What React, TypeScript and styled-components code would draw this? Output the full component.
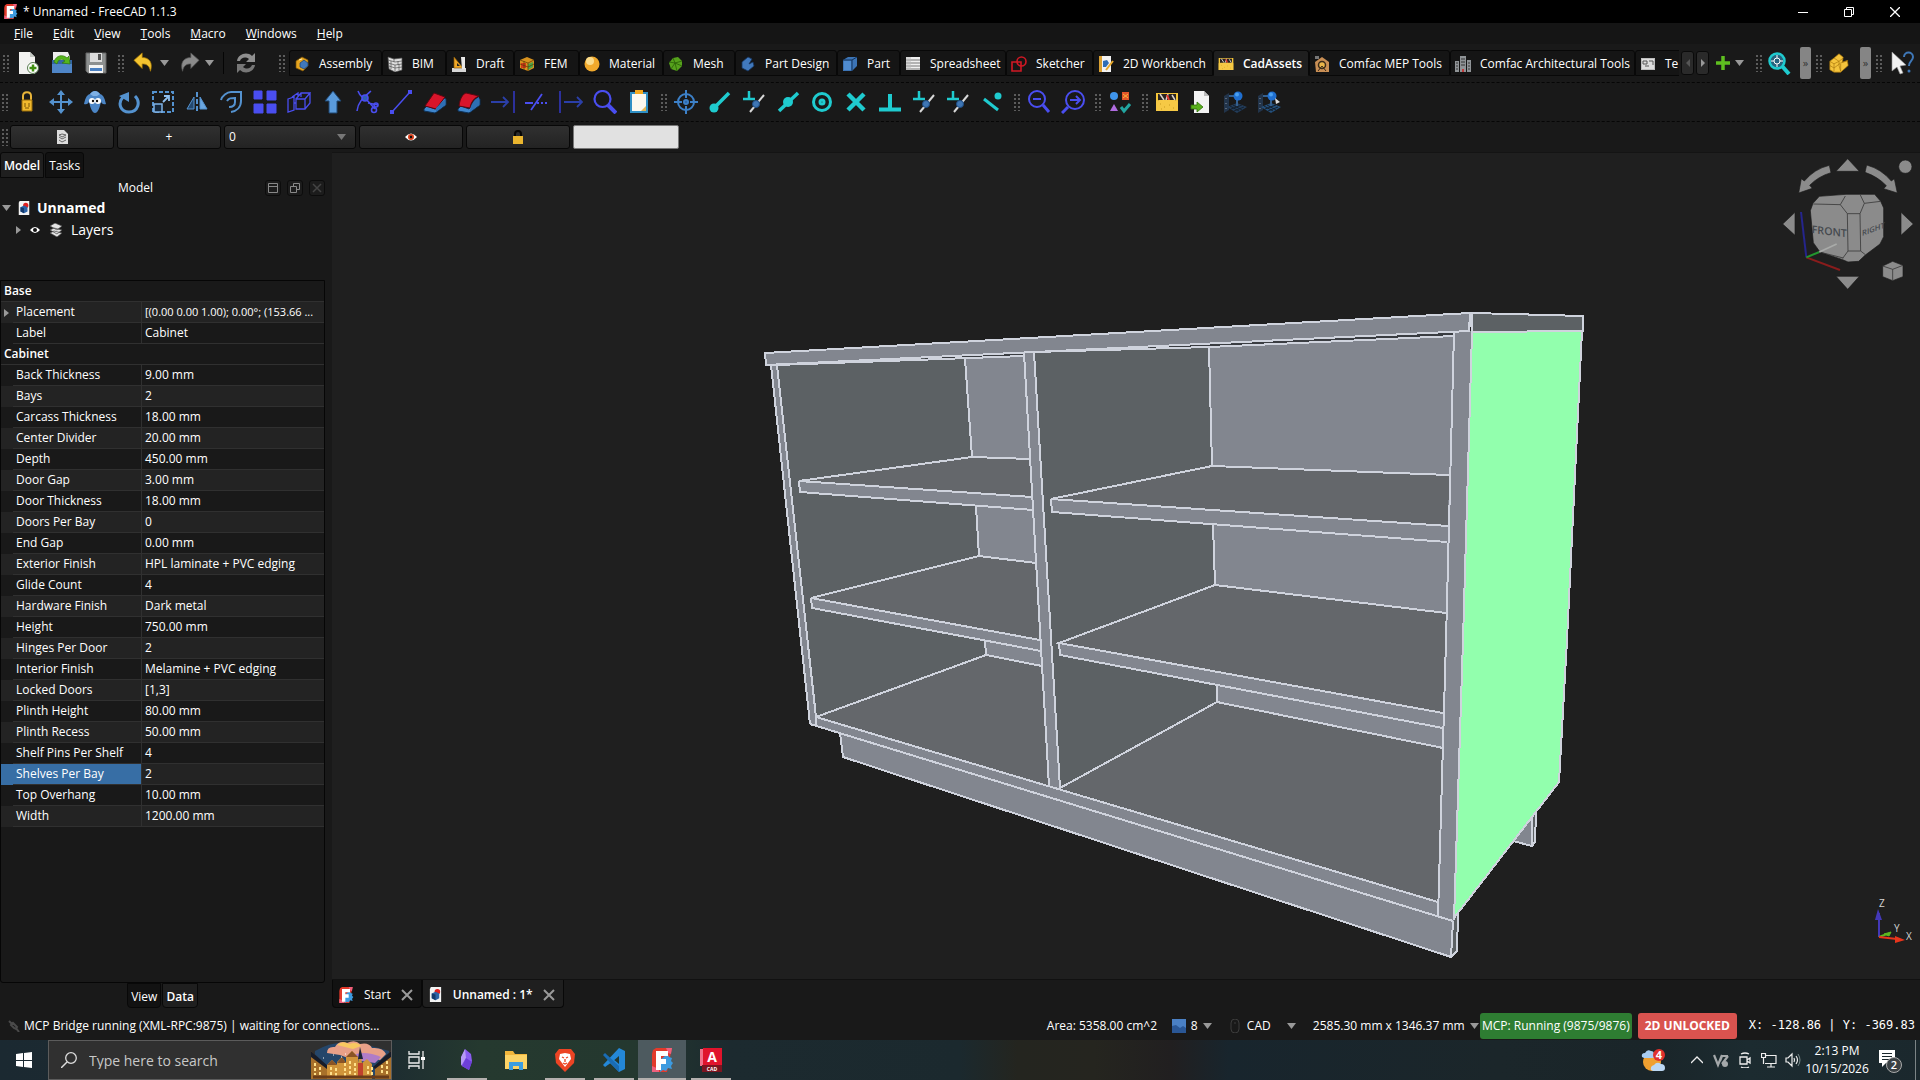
import React from "react";
import styled, { createGlobalStyle } from "styled-components";

const ui = `"Open Sans", "Noto Sans", sans-serif`;

const Global = createGlobalStyle`
  *, *::before, *::after { box-sizing: border-box; }
  body { margin: 0; background: #191919; color: #fff; font: 12px/16px ${ui}; }
  button, input, select { font: inherit; color: inherit; margin: 0; }
  button { background: none; border: 0; padding: 0; cursor: pointer; }
  svg { display: block; flex: none; }
`;

/* ---------- shell ---------- */
const Shell = styled.div`
  display: flex;
  flex-direction: column;
  height: 100vh;
  overflow: hidden;
`;
const TitleBar = styled.header`
  display: flex;
  align-items: center;
  height: 23px;
  padding-left: 3px;
  gap: 5px;
  background: #000;
`;
const TitleText = styled.span`
  flex: 1;
  white-space: nowrap;
`;
const WinControls = styled.div`
  display: flex;
  padding-right: 2px;
`;
const WinButton = styled.button`
  display: grid;
  place-items: center;
  width: 46px;
  height: 20px;
`;
const MenuBar = styled.nav`
  display: flex;
  align-items: center;
  height: 21px;
  padding-left: 14px;
  gap: 20px;
  background: #151515;
`;
const MenuItem = styled.button`
  &::first-letter { text-decoration: underline; }
`;
const Toolbar = styled.div<{ $h: number; $last?: boolean }>`
  display: flex;
  align-items: center;
  height: ${(p) => p.$h}px;
  border-bottom: ${(p) => (p.$last ? "0" : "1px dashed #060606")};
`;
const Grip = styled.span<{ $w: number; $after?: number }>`
  flex: none;
  align-self: center;
  width: ${(p) => p.$w}px;
  height: 18px;
  margin-right: ${(p) => p.$after ?? 0}px;
  background: radial-gradient(circle, #5c5c5c 1px, transparent 1px) right 1px top / 4px 4px repeat-y,
    radial-gradient(circle, #5c5c5c 1px, transparent 1px) right 5px top / 4px 4px repeat-y;
`;
const ToolButton = styled.button<{ $w?: number; $gap?: number }>`
  flex: none;
  display: flex;
  align-items: center;
  justify-content: center;
  gap: ${(p) => p.$gap ?? 5}px;
  width: ${(p) => p.$w ?? 34}px;
  height: 34px;
`;
const Rule = styled.span`
  width: 1px;
  height: 22px;
  margin: 0 5px;
  background: #050505;
`;
const TabStrip = styled.div`
  flex: 1;
  min-width: 0;
  display: flex;
  margin-left: 2px;
  overflow: hidden;
`;
const BenchTab = styled.button<{ $w: number; $active?: boolean }>`
  flex: none;
  display: flex;
  align-items: center;
  gap: 9px;
  width: ${(p) => p.$w}px;
  height: 26px;
  padding: 1px 0 0 4px;
  border: 1px solid #080808;
  border-bottom-color: ${(p) => (p.$active ? "#1f1f1f" : "#080808")};
  border-radius: 3px 3px 0 0;
  background: ${(p) => (p.$active ? "#1f1f1f" : "#151515")};
  font-weight: ${(p) => (p.$active ? 600 : 400)};
  white-space: nowrap;
`;
const ScrollButton = styled.button`
  flex: none;
  display: grid;
  place-items: center;
  width: 13px;
  height: 24px;
  margin-left: 2px;
  border: 1px solid #0a0a0a;
  border-radius: 3px;
  background: #2a2a2a;
`;
const Extension = styled.button`
  flex: none;
  width: 11px;
  height: 32px;
  margin-left: 6px;
  border-radius: 2px;
  background: #858585;
  color: #333;
  font-size: 11px;
`;
const LayerBar = styled.div`
  display: flex;
  gap: 3px;
`;
const panelButton = `
  height: 24px;
  border: 1px solid #070707;
  border-radius: 3px;
  background: linear-gradient(#303030, #232323);
`;
const WideButton = styled.button`
  ${panelButton}
  display: grid;
  place-items: center;
  width: 104px;
`;
const SelectBox = styled.label`
  ${panelButton}
  display: flex;
  align-items: center;
  width: 132px;
  padding: 0 9px 0 4px;
`;
const BareSelect = styled.select`
  appearance: none;
  flex: 1;
  min-width: 0;
  padding: 0;
  border: 0;
  outline: 0;
  background: transparent;
`;
const ColourWell = styled.button`
  width: 106px;
  height: 24px;
  border: 1px solid #777;
  border-radius: 2px;
  background: #e1e1e1;
`;

/* ---------- dock ---------- */
const Work = styled.main`
  flex: 1;
  min-height: 0;
  display: flex;
  gap: 7px;
`;
const Dock = styled.aside`
  flex: none;
  display: flex;
  flex-direction: column;
  width: 325px;
`;
const TabRow = styled.div<{ $center?: boolean }>`
  display: flex;
  gap: 1px;
  justify-content: ${(p) => (p.$center ? "center" : "flex-start")};
`;
const DockTab = styled.button<{ $active?: boolean; $bottom?: boolean }>`
  height: ${(p) => (p.$bottom ? 25 : 26)}px;
  padding: 2px 3px 0;
  border: 1px solid #080808;
  border-radius: ${(p) => (p.$bottom ? "0 0 4px 4px" : "3px 3px 0 0")};
  background: ${(p) => (p.$active ? "#1f1f1f" : "#121212")};
  font-weight: ${(p) => (p.$active ? 600 : 400)};
`;
const DockHead = styled.div`
  display: flex;
  align-items: center;
  gap: 6px;
  height: 19px;
`;
const DockTitle = styled.h2`
  flex: 1;
  margin: 0;
  padding-left: 12px;
  text-align: center;
  font: inherit;
`;
const DockButton = styled.button`
  display: grid;
  place-items: center;
  width: 16px;
  height: 16px;
  border: 1px solid #0c0c0c;
  border-radius: 3px;
  background: #1c1c1c;
`;
const Tree = styled.ul`
  height: 83px;
  margin: 0;
  padding: 0;
  list-style: none;
  font-size: 14px;
`;
const TreeRow = styled.li<{ $indent: number; $bold?: boolean; $gap: number }>`
  display: flex;
  align-items: center;
  gap: ${(p) => p.$gap}px;
  height: 22px;
  padding-left: ${(p) => p.$indent}px;
  font-weight: ${(p) => (p.$bold ? 700 : 400)};
`;
const PropBox = styled.div`
  flex: 1;
  min-height: 0;
  border: 1px solid #060606;
  border-radius: 0 0 3px 3px;
`;
const PropTable = styled.table`
  width: 100%;
  table-layout: fixed;
  border-collapse: separate;
  border-spacing: 0;
`;
const GroupCell = styled.th`
  height: 21px;
  padding: 0 3px;
  border-bottom: 1px solid #303030;
  text-align: left;
  font-weight: 600;
`;
const PropRow = styled.tr<{ $alt: boolean }>`
  height: 21px;
  background: ${(p) => (p.$alt ? "#232323" : "#191919")};
`;
const Gutter = styled.td<{ $on?: boolean }>`
  width: 12px;
  padding: 0 0 0 3px;
  background: ${(p) => (p.$on ? "#376ea5" : "transparent")};
`;
const NameCell = styled.td<{ $on?: boolean }>`
  width: 129px;
  padding: 0 3px;
  border-bottom: 1px solid #303030;
  border-right: 1px solid #303030;
  background: ${(p) => (p.$on ? "#376ea5" : "transparent")};
  white-space: nowrap;
`;
const ValueCell = styled.td<{ $dense?: boolean }>`
  padding: 0 3px;
  border-bottom: 1px solid #303030;
  white-space: nowrap;
  font-size: ${(p) => (p.$dense ? 11 : 12)}px;
`;

/* ---------- viewer ---------- */
const Viewer = styled.section`
  flex: 1;
  min-width: 0;
  display: flex;
  flex-direction: column;
`;
const Canvas = styled.div`
  position: relative;
  flex: 1;
  min-height: 0;
  border-top: 1px solid #141414;
  background: #1f1f1f;
`;
const Scene = styled.svg`
  width: 100%;
  height: 100%;
`;
const NavCube = styled.svg`
  position: absolute;
  top: 0;
  right: 0;
`;
const AxisCross = styled.svg`
  position: absolute;
  right: 0;
  bottom: 26px;
`;
const DocTabs = styled.div`
  display: flex;
  height: 29px;
  border-top: 1px solid #111;
`;
const DocTab = styled.div<{ $active?: boolean }>`
  display: flex;
  align-items: center;
  gap: 10px;
  padding: 2px 8px 0 5px;
  border: 1px solid #080808;
  border-top: 0;
  border-radius: 0 0 4px 4px;
  background: ${(p) => (p.$active ? "#1f1f1f" : "#121212")};
  font-weight: ${(p) => (p.$active ? 600 : 400)};
`;
const CloseTab = styled.button``;

/* ---------- status bar ---------- */
const Status = styled.footer`
  flex: none;
  display: flex;
  align-items: center;
  height: 32px;
  padding: 4px 5px 0 8px;
  white-space: nowrap;
`;
const Message = styled.div`
  flex: 1;
  display: flex;
  align-items: center;
  gap: 4px;
`;
const StatusItem = styled.button<{ $w: number }>`
  flex: none;
  display: flex;
  align-items: center;
  gap: 5px;
  width: ${(p) => p.$w}px;
`;
const Spread = styled.span<{ $pad?: number }>`
  flex: 1;
  padding-left: ${(p) => p.$pad ?? 0}px;
  text-align: left;
`;
const Badges = styled.div`
  display: flex;
  gap: 6px;
  margin: 0 6px 0 8px;
`;
const Badge = styled.button<{ $bg: string; $w: number; $bold?: boolean }>`
  width: ${(p) => p.$w}px;
  height: 26px;
  border-radius: 3px;
  background: ${(p) => p.$bg};
  font-weight: ${(p) => (p.$bold ? 700 : 400)};
`;
const Coords = styled.output`
  padding: 0 0 3px 6px;
  font: 12px/16px "DejaVu Sans Mono", "Liberation Mono", monospace;
`;

/* ---------- taskbar ---------- */
const Taskbar = styled.footer`
  flex: none;
  display: flex;
  height: 40px;
  background: linear-gradient(90deg, #1b2931 0%, #1d2c31 20%, #25392f 25%, #24382f 33%, #1c2a2f 38%, #1b292e 50%, #24251f 53%, #25251f 57%, #211f20 61%, #18252d 64%, #1b262a 78%, #1a2529 86%, #1c2b30 91%, #1b282d 100%);
`;
const StartButton = styled.button`
  display: grid;
  place-items: center;
  width: 48px;
`;
const SearchBox = styled.label`
  display: flex;
  align-items: center;
  gap: 12px;
  width: 344px;
  padding-left: 12px;
  border: 1px solid #5c5c5c;
  background: #303030;
`;
const SearchInput = styled.input`
  flex: 1;
  min-width: 0;
  padding: 2px 0 0;
  border: 0;
  outline: 0;
  background: transparent;
  font-size: 14px;
  &::placeholder { color: #c8c8c8; opacity: 1; }
`;
const TaskApp = styled.button<{ $running?: boolean; $active?: boolean; $w?: number }>`
  display: flex;
  flex-direction: column;
  align-items: center;
  justify-content: space-between;
  width: ${(p) => p.$w ?? 49}px;
  padding-top: 8px;
  background: ${(p) => (p.$active ? "#4d5a5f" : "transparent")};
  &::after {
    content: "";
    width: ${(p) => (p.$active ? "100%" : "40px")};
    height: 2px;
    background: ${(p) => (p.$running ? "#b4b0ae" : "transparent")};
  }
`;
const Tray = styled.div`
  flex: 1;
  display: flex;
  align-items: center;
  justify-content: flex-end;
  padding-right: 4px;
`;
const TrayButton = styled.button<{ $w?: number }>`
  display: grid;
  place-items: center;
  width: ${(p) => p.$w ?? 24}px;
  height: 40px;
`;
const Clock = styled.time`
  width: 64px;
  text-align: center;
  line-height: 18px;
`;
const ShowDesktop = styled.span`
  width: 1px;
  height: 40px;
  margin-left: 4px;
  background: #7c8486;
`;

/* ---------- icons ---------- */
const Svg = ({ s = 24, v = 24, children }: { s?: number; v?: number; children: React.ReactNode }) => (
  <svg width={s} height={s} viewBox={`0 0 ${v} ${v}`} fill="none" aria-hidden="true">{children}</svg>
);
const Down = ({ c = "#999" }: { c?: string }) => (
  <svg width="9" height="6" viewBox="0 0 9 6" aria-hidden="true"><path d="M0 0h9L4.500 6z" fill={c} /></svg>
);
const Side = ({ c = "#999" }: { c?: string }) => (
  <svg width="5" height="8" viewBox="0 0 5 8" aria-hidden="true"><path d="M0 0l5 4-5 4z" fill={c} /></svg>
);

const FreeCadLogo = ({ s }: { s: number }) => (
  <Svg s={s}>
    <path d="M3 2l3-2h16l-2 9-3 15H2V6z" fill="#e23a2b" />
    <path d="M15 8l3-1 1 2 3 1-1 3 2 2-2 3 1 3-4-1-2 3-3-1-3 2V12z" fill="#3d9be0" />
    <path d="M2 18l7 3v3H2zM16 0h6l-1 6-3-1z" fill="#f0607c" />
    <path d="M6 3h12v5h-7v3h5v5h-5v6H6z" fill="#fff" />
  </Svg>
);
const DocIcon = ({ s }: { s: number }) => (
  <Svg s={s} v={16}>
    <path d="M3 0h11v16H2V2z" fill="#f3f3f3" />
    <circle cx="10" cy="5" r="3" fill="#e02020" />
    <path d="M4 7l4-2 4 2v5l-4 2-4-2z" fill="#2c62a5" />
    <path d="M4 7l4 1v6l-4-2z" fill="#143a6e" />
  </Svg>
);

const B = "#5492cf";
const P = "#4a4ef0";
const C = "#1fcbcf";
const W = "#d8d8d8";

const mag = (x: number, y: number, r: number, c: string, flip = false) => (
  <g stroke={c} strokeWidth="2">
    <circle cx={x} cy={y} r={r} />
    <path d={flip ? `M${x - r + 2} ${y + r - 2}L1 23` : `M${x + r - 2} ${y + r - 2}l6 7`} strokeWidth="3" />
  </g>
);
const hingeDot = (
  <>
    <path d="M1 9h12M7 1v8" stroke={C} strokeWidth="2.500" />
    <path d="M8 22L22 5" stroke={W} strokeWidth="2" />
    <circle cx="14" cy="14" r="3.500" fill="#3f76b4" stroke="#1e4d85" />
  </>
);
const bluegrid = (lit: boolean) => (
  <>
    <path d="M1 6l5-3v17l-5 3z" fill="#22344a" />
    <path d="M3 8v1M3 13v1M3 18v1" stroke="#8c98a8" />
    <path d="M4 17l10-4 10 4-10 6z" fill={lit ? "#24507c" : "#223c5a"} />
    <path d="M8 19l11-4M11 21l10-4M10 15l9 5M7 16l9 5" stroke="#15202c" />
    <path d="M14 9v7M6 6h6" stroke="#35608f" strokeWidth="2" />
    <circle cx="15" cy="6" r="4.500" fill="#1f6fd0" />
    <circle cx="14" cy="4.500" r="2" fill="#4aa0f0" />
  </>
);

const I: Record<string, React.ReactNode> = {
  new: <><path d="M3 1h11l5 5v17H3z" fill="#f2f2f0" /><path d="M14 1l5 5h-5z" fill="#c4c8c2" /><circle cx="17" cy="17" r="5.500" fill="#fff" stroke="#587a50" /><path d="M17 13.500v7M13.500 17h7" stroke="#3f8f10" strokeWidth="2.500" /></>,
  open: <><path d="M3 1h15l2 5v6H3z" fill="#eee" /><path d="M2 9h20v13H2z" fill="#3465a4" /><path d="M2 13h20v9H2z" fill="#4f86c8" /><path d="M4 11C6 4 13 3 17 7l2-2 1 8-8-1 3-2c-3-3-7-2-8 3z" fill="#55b51c" stroke="#2f7a0a" strokeWidth=".7" /></>,
  save: <><path d="M2 2h20v20H4l-2-2z" fill="#8d9090" stroke="#666" /><path d="M6 2h12v9H6z" fill="#ddd" /><path d="M14 3h3v6h-3z" fill="#555" /><path d="M5 14h14v8H5z" fill="#f4f4f4" /><path d="M6 17h12v3H6z" fill="#4a7fc0" /></>,
  undo: <path d="M1 9l9-8v5c8 0 12 6 9 15-1-6-4-8-9-8v5z" fill="#f4c430" stroke="#a97c05" strokeWidth=".8" />,
  redo: <path d="M23 9l-9-8v5C6 6 2 12 5 21c1-6 4-8 9-8v5z" fill="#8b8b8b" stroke="#555" strokeWidth=".8" />,
  refresh: <><path d="M3 10C4 3 13 0 18 5l3-3v9h-9l3-3c-4-3-8-1-9 2z" fill="#8f8f8f" /><path d="M21 14c-1 7-10 10-15 5l-3 3v-9h9l-3 3c4 3 8 1 9-2z" fill="#777" /></>,
  lock: <><path d="M8 11V6c0-5 8-5 8 0v5" stroke="#e8b53a" strokeWidth="2" /><path d="M7 10h10v11H7z" fill="#f0b92e" stroke="#9a6c08" /><path d="M10 13v4M14 13v4M10 18h4" stroke="#7a5505" /></>,
  move: <><path d="M12 2v20M2 12h20" stroke={B} strokeWidth="2" /><path d="M12 0l4 5H8zM12 24l4-5H8zM0 12l5-4v8zM24 12l-5-4v8z" fill={B} /></>,
  goat: <><path d="M7 4c3-4 7-4 10 0 4 1 5 6 6 10-3 1-5-1-5-3-1 6-3 12-6 12s-5-6-6-12c0 2-2 4-5 3 1-4 2-9 6-10z" fill="#4c86c6" /><path d="M7 4c3-4 7-4 10 0l-3 2h-4z" fill="#7eb0e4" /><circle cx="9" cy="11" r="3" fill="#fff" /><circle cx="15" cy="11" r="3" fill="#fff" /><circle cx="10" cy="11" r="1.200" fill="#111" /><circle cx="14" cy="11" r="1.200" fill="#111" /></>,
  rotate: <><path d="M6 7c-6 7-2 15 6 15 9 0 12-10 6-16" stroke={B} strokeWidth="3" /><path d="M2 6l10-4v10z" fill={B} /></>,
  scale: <><path d="M2 2h20v20H2z" stroke={B} strokeWidth="2" strokeDasharray="4 2" /><path d="M3 14h8v8H3z" fill="#16283c" stroke="#7fb2e6" strokeWidth="1.500" /><path d="M12 12l6-6M13 6h5v5" stroke="#8fc0f0" strokeWidth="1.800" /></>,
  mirror: <><path d="M12 2v20" stroke={B} strokeWidth="2" strokeDasharray="5 2" /><path d="M9 7v12H2z" fill="#24486e" stroke={B} /><path d="M15 7v12h7z" fill="#6aa6e0" stroke={B} /></>,
  offset: <><path d="M2 10c1-4 6-8 10-8h10v9c0 6-4 10-10 11" stroke={B} strokeWidth="2" /><path d="M8 11c2-3 4-3 8-3v4c0 4-3 5-6 5" stroke={B} strokeWidth="2" /></>,
  array: <path d="M1 1h8v8H1zM14 1h9v9h-9zM1 14h9v9H1zM14 14h9v9h-9z" fill={P} stroke={P} />,
  box: <path d="M1 9l6-2v13l-6 2zM9 9h9v10H9zM9 9l5-6h9l-5 6M23 3v10l-5 6M9 9l5-6M14 3v4M7 13h2M5 7l6-4v3" stroke={P} strokeWidth="1.300" />,
  up: <path d="M12 1l8 10h-4v12H8V11H4z" fill="#5a9bdc" stroke="#1e4670" />,
  trim: <g stroke={P} strokeWidth="1.600"><path d="M3 1c2 5 5 7 8 7M2 21C3 12 8 8 16 1M11 9l9 10M13 13l10 2" /><circle cx="19" cy="20" r="2.500" /><circle cx="21" cy="15" r="2" /><circle cx="10" cy="8" r="3" fill="#2f5fb4" /></g>,
  line: <><path d="M3 22L21 2" stroke={P} strokeWidth="1.500" /><path d="M1 20h4v4H1zM19 0h4v4h-4z" fill={P} /></>,
  fillet: <><path d="M1 19l3-3 8 3 9-11 2 1v6l-11 8-11-2z" fill="#3f86cc" stroke="#0d3157" /><path d="M2 16L11 3l11 4-9 12z" fill="#d8152b" stroke="#5c0610" /><path d="M22 9v6l-9 7v-4z" fill="#2e6fb4" /></>,
  chamfer: <><path d="M1 19l3-3 8 3 9-11 2 1v6l-11 8-11-2z" fill="#3f86cc" stroke="#0d3157" /><path d="M2 16C3 8 6 4 9 3l13 3c-5 2-8 6-9 12z" fill="#d8152b" stroke="#5c0610" /><path d="M22 7v8l-9 7c0-7 4-13 9-15z" fill="#2e6fb4" /></>,
  arrowBar: <><path d="M0 12h17M12 7l5 5-5 5" stroke="#2b3fa8" strokeWidth="1.800" /><path d="M23 1v22" stroke="#3338c8" strokeWidth="1.500" /></>,
  trimex: <><path d="M0 13h8M6 20L17 4" stroke={P} strokeWidth="1.800" /><path d="M12 13h12" stroke={P} strokeWidth="1.800" strokeDasharray="2 2" /></>,
  barArrow: <><path d="M5 12h18M18 7l5 5-5 5" stroke="#2b3fa8" strokeWidth="1.800" /><path d="M1 1v22" stroke="#3338c8" strokeWidth="1.500" /></>,
  zoom: <g stroke={P}><circle cx="9.500" cy="9" r="8" strokeWidth="2.200" /><path d="M15 15l8 8" strokeWidth="4" /></g>,
  clip: <><path d="M3 2h18v21H3z" fill="#2f8fc4" /><path d="M5 4h14v17H5z" fill="#fbf8ee" /><path d="M8 0h8v4H8z" fill="#f2a81d" /><path d="M14 21l5-5v5z" fill="#e2b755" /></>,
  target: <g stroke="#3c80c8" strokeWidth="2"><circle cx="12" cy="12" r="8" /><path d="M12 0v8M12 16v8M0 12h8M16 12h8" /><circle cx="12" cy="12" r="2" fill="#2a62a4" /></g>,
  endp: <><path d="M6 18L21 3" stroke={C} strokeWidth="3.500" /><circle cx="6" cy="18" r="4.500" fill={C} /></>,
  hinge: hingeDot,
  mid: <><path d="M3 21L22 3" stroke={C} strokeWidth="3.500" /><circle cx="12" cy="12" r="5" fill={C} /></>,
  centre: <g stroke={C}><circle cx="12" cy="12" r="8.500" strokeWidth="3" /><circle cx="12" cy="12" r="2" strokeWidth="3" /></g>,
  cross: <path d="M4 4l16 16M20 4L4 20" stroke={C} strokeWidth="4.500" />,
  perp: <path d="M1 19.500h22M12 4v15" stroke={C} strokeWidth="4" />,
  near: <><path d="M4 9l14 11" stroke={C} strokeWidth="3" /><circle cx="18" cy="6" r="3.500" fill={C} /></>,
  zoomOut: <>{mag(10, 9, 8, P)}<path d="M6 9h8" stroke={P} strokeWidth="2" /></>,
  zoomGo: <>{mag(14, 10, 9, P, true)}<path d="M9 10h9M15 6l4 4-4 4" stroke={P} strokeWidth="2" /></>,
  shapes: <><circle cx="6" cy="6" r="4" fill="#3f95ec" /><path d="M14 2h7v8h-7z" fill="#e2552a" /><path d="M15 4l5 4M20 4l-5 4" stroke="#f6b73c" /><path d="M6 14l4 7H2z" fill="#b06ce0" /><path d="M13 17l3 4 6-7" stroke="#22a5a0" strokeWidth="3" /></>,
  toolbox: <><path d="M1 3h22v18H1z" fill="#f5c53a" /><path d="M3 4h18v7H3z" fill="#2a2420" /><path d="M5 4l4 6M13 4l-2 6M17 5l3 5" stroke="#d9d2cc" strokeWidth="1.500" /><path d="M12 5l2 5" stroke="#e83a30" strokeWidth="2" /><path d="M1 11l3-1h16l3 1v10H1z" fill="#f6c945" /><path d="M5 14h1M9 17h1M14 15h1M18 18h1M6 19h1" stroke="#c99a1e" /></>,
  importDoc: <><path d="M5 1h10l5 5v17H5z" fill="#f2f2f2" /><path d="M15 1l5 5h-5z" fill="#bbb" /><path d="M2 15h6v-3l6 5-6 5v-3H2z" fill="#59b01c" stroke="#2f6f08" strokeWidth=".8" /></>,
  db1: bluegrid(false),
  db2: <>{bluegrid(true)}<path d="M18 8l5 4-4 2z" fill="#ddd" /></>,
  plus: <path d="M6 0h4v6h6v4h-6v6H6v-6H0V6h6z" fill="#5fbf20" />,
  find: <><circle cx="10" cy="10" r="7.500" fill="#27637e" stroke={C} strokeWidth="2.500" /><path d="M15 15l7 8" stroke={C} strokeWidth="4" /><circle cx="10" cy="10" r="3" stroke="#fff" /><path d="M10 4v3M10 13v3M4 10h3M13 10h3" stroke="#fff" /></>,
  blocks: <g fill="#f5c43c" stroke="#a8760c" strokeWidth=".8"><path d="M6 6l6-5 5 4-1 6 6-2 1 6-9 8H6l-5-3V10z" /><path d="M1 10l5 3v9M6 6l6 4 5-4M1 15l5 3 8-6 9-3M12 10v5l2 7M6 13l6-3M14 13v9" fill="none" /></g>,
  help: <><path d="M2 1l14 13-6 1 3 7-3 1-3-7-5 4z" fill="#f2f2f2" stroke="#999" strokeWidth=".6" /><path d="M14 6c0-6 9-6 9 0 0 4-4 4-4 9" stroke="#3f78b8" strokeWidth="2" /><circle cx="19" cy="20" r="1.500" fill="#3f78b8" /></>,
  /* workbench marks on a 16 unit grid */
  assembly: <><path d="M2 5l6-4 6 3v6l-5 5-7-3z" fill="#e6a51f" stroke="#7a5206" strokeWidth=".7" /><path d="M6 7l4-3 4 3v3l-4 3-4-2z" fill="#3f78bb" stroke="#173c6a" strokeWidth=".7" /><path d="M5 4l3-1" stroke="#fff2b8" /></>,
  bim: <g fill="#dedede" stroke="#555" strokeWidth=".7"><path d="M1 1l6 2 8-1v12l-7 2-6-3z" /><path d="M1 4l7 2 7-1M1 7l7 2 7-1M2 10l6 2 7-1M7 3v3M4 5v3M11 5v4M8 9v6M4 8v5M12 8v6" fill="none" /></g>,
  draft: <><path d="M1 12h14v4H1z" fill="#d7d7d7" /><path d="M3 12V1l9 11z" fill="#f0a828" stroke="#8a5a08" strokeWidth=".7" /><path d="M10 1h4v12h-3z" fill="#e9e9e9" /><path d="M6 10V7l3 3z" fill="#222" /></>,
  fem: <><path d="M1 4l7-3 7 3v8l-6 3-8-3z" fill="#d8921e" /><path d="M2 7h5v5H2z" fill="#d33a1a" /><path d="M9 8l5-2v5l-5 3z" fill="#4ea548" /><path d="M1 4l8 3 6-3M9 7v8M5 5v9M1 8l8 3 6-3" stroke="#5a3804" strokeWidth=".7" /></>,
  material: <><circle cx="8" cy="8" r="7.500" fill="#f1a92c" /><circle cx="6" cy="5" r="4" fill="#fbdc8c" /></>,
  mesh: <><path d="M5 2l5-1 4 4v5l-5 5-6-2-2-6z" fill="#56a21c" /><path d="M5 2l2 5-6-1M7 7l7-2M7 7l2 8M7 7l-4 6M7 7l7 3" stroke="#2a5e08" strokeWidth=".8" /></>,
  partDesign: <path d="M2 6l6-5 4 2-3 5 4-2 1 4-6 5-6-3z" fill="#4179bd" stroke="#15355e" strokeWidth=".8" />,
  part: <><path d="M1 4l5-3h9v9l-5 5H1z" fill="#3c74b6" /><path d="M1 4h9l5-3M10 4v11" stroke="#12325a" /><path d="M2 5h7v9H2z" fill="#4f8bcf" /></>,
  sheet: <><path d="M1 1h14v13H1z" fill="#f0f0f0" /><path d="M1 4h14M1 7h14M1 10h14M1 13h14" stroke="#777" /><path d="M1 1h5v13H1z" fill="#bbb" opacity=".5" /></>,
  sketcher: <g stroke="#cf1824" strokeWidth="1.600"><path d="M1 6h9v9H1z" /><circle cx="10.500" cy="5.500" r="4.500" /></g>,
  twoD: <><path d="M1 0h3v16H1z" fill="#d9a032" /><path d="M4 0h9v16H4z" fill="#f2f2f2" /><path d="M5 5l4-1 2 3-3 4H5z" fill="#2f6db5" /><path d="M15 5l-7 9" stroke="#e8a82a" strokeWidth="2" /></>,
  mep: <><path d="M1 6l7-5 7 5v10H2z" fill="#c98f55" /><path d="M1 0h4v3H1z" fill="#777" /><circle cx="8" cy="9" r="3.500" fill="#e8b44a" stroke="#3a2a1a" strokeWidth="1.500" /><path d="M4 15l4-5 4 5" stroke="#3a2a1a" /></>,
  arch: <><path d="M0 5h4v11H0zM5 0h6v16H5zM12 4h4v12h-4z" fill="#8f9396" /><path d="M1 7h2M1 10h2M1 13h2M6 3h4M6 6h4M6 9h4M13 7h2M13 10h2M13 13h2" stroke="#333" /><path d="M7 13h2v3H7z" fill="#c03a3a" /></>,
  tech: <><path d="M1 2h14v12H1z" fill="#bdbdbd" /><path d="M2 3h12v10H2z" fill="#ddd" /><path d="M3 5h4v3H3zM9 5h4v4M5 10h4" stroke="#555" /></>,
  obsidian: <><path d="M10 1l6 5 1 7-3 9-7-4-1-8z" fill="#8a5cf0" /><path d="M10 1l1 9-5 8V9z" fill="#b79af6" /><path d="M11 10l6 4-3 8-7-4z" fill="#6d3fd8" /></>,
  folder: <><path d="M1 3h8l2 3h12v15H1z" fill="#f2b63c" /><path d="M1 7h22v14H1z" fill="#fcd366" /><path d="M5 22v-8h14v8h-4v-4H9v4z" fill="#3b9de0" /></>,
  brave: <><path d="M6 1h12l4 5-1 9-9 9-9-9-1-9z" fill="#ec4424" /><path d="M7 6l5-1 5 1 1 5-3 4-3 4-3-4-3-4z" fill="#fff" /><path d="M9 9l2 1M15 9l-2 1M12 11v3M10 15l2 1 2-1" stroke="#ec4424" strokeWidth="1.300" /></>,
  code: <><path d="M17 0l6 3v18l-6 3L6 13l4-3 7 6V8l-7 6L3 19l-2-2L17 0z" fill="#2488d8" /><path d="M1 7l2-2 14 13v6z" fill="#1a6cb4" /></>,
};

/* ---------- data ---------- */
const benches: [string, string, number][] = [
  ["assembly", "Assembly", 93], ["bim", "BIM", 64], ["draft", "Draft", 68], ["fem", "FEM", 65],
  ["material", "Material", 84], ["mesh", "Mesh", 72], ["partDesign", "Part Design", 102], ["part", "Part", 63],
  ["sheet", "Spreadsheet", 106], ["sketcher", "Sketcher", 87], ["twoD", "2D Workbench", 120],
  ["toolbox", "CadAssets", 96], ["mep", "Comfac MEP Tools", 141], ["arch", "Comfac Architectural Tools", 185],
  ["tech", "Te", 48],
];
const toolGroups: string[][] = [
  ["lock", "move", "goat", "rotate", "scale", "mirror", "offset", "array", "box", "up", "trim", "line", "fillet", "chamfer", "arrowBar", "trimex", "barArrow", "zoom", "clip"],
  ["target", "endp", "hinge", "mid", "centre", "cross", "perp", "hinge", "hinge", "near"],
  ["zoomOut", "zoomGo"],
  ["shapes"],
  ["toolbox", "importDoc", "db1", "db2"],
];
const cabinetProps: [string, string][] = [
  ["Back Thickness", "9.00 mm"], ["Bays", "2"], ["Carcass Thickness", "18.00 mm"], ["Center Divider", "20.00 mm"],
  ["Depth", "450.00 mm"], ["Door Gap", "3.00 mm"], ["Door Thickness", "18.00 mm"], ["Doors Per Bay", "0"],
  ["End Gap", "0.00 mm"], ["Exterior Finish", "HPL laminate + PVC edging"], ["Glide Count", "4"],
  ["Hardware Finish", "Dark metal"], ["Height", "750.00 mm"], ["Hinges Per Door", "2"],
  ["Interior Finish", "Melamine + PVC edging"], ["Locked Doors", "[1,3]"], ["Plinth Height", "80.00 mm"],
  ["Plinth Recess", "50.00 mm"], ["Shelf Pins Per Shelf", "4"], ["Shelves Per Bay", "2"],
  ["Top Overhang", "10.00 mm"], ["Width", "1200.00 mm"],
];

const FRONT = "#82868f";
const SIDE = "#5c6164";
const FLAT = "#64676b";

/* Faces are painted back to front. */
const faces: [string, string][] = [
  [FRONT, "1513,841 1532,846 1532,817 1540,800"],
  [SIDE, "1532,846 1535,842 1536,811 1532,817"],
  [SIDE, "777,365 1454,333 1438,902 816,717"],
  [FRONT, "965,359 1030,356 1042,666 986,655"],
  [FRONT, "1209,347 1454,336 1443,748 1217,702"],
  [SIDE, "1034,352 1209,347 1217,702 1060,788"],
  [FLAT, "816,717 986,655 1042,666 1049,786"],
  [FLAT, "1060,788 1217,702 1443,748 1438,902"],
  [FLAT, "799,481 972,457 1030,459 1032,497"],
  [FLAT, "811,598 979,556 1036,563 1040,640"],
  [FLAT, "1051,499 1212,466 1449,475 1448,526"],
  [FLAT, "1059,643 1215,585 1446,613 1443,713"],
  [FRONT, "799,481 1032,497 1033,510 800,492"],
  [FRONT, "811,598 1040,640 1041,651 812,608"],
  [FRONT, "1051,499 1448,526 1447,542 1052,512"],
  [FRONT, "1059,643 1443,713 1443,728 1060,655"],
  [FRONT, "840,733 1453,921 1451,957 843,757"],
  [SIDE, "1453,921 1458,914 1457,951 1451,957"],
  [FRONT, "816,717 1438,902 1453,921 810,724"],
  [FRONT, "1024,353 1034,352 1060,788 1049,786"],
  [FRONT, "771,365 777,365 816,717 816,726 810,724"],
  [FRONT, "1454,332 1472,331 1454,921 1438,916"],
  ["#3a3d42", "925,357 1024,353 1024,356 925,360"],
  ["#3a3d42", "1150,346 1454,332 1454,336 1150,349"],
  [FRONT, "765,353 1470,313 1469,331 766,365"],
  [SIDE, "1472,313 1583,316 1583,331 1472,332"],
  ["#92ffad", "1472,332 1582,331 1559,782 1454,918"],
];
const edges = [
  "M765 353L1470 313 1469 331 766 365z", "M1470 313h3L1583 316V331L1472 332z", "M1472 313V332",
  "M777 365L1024 356M1034 352L1209 347 1454 336", "M771 365L810 724M777 365L816 717V726",
  "M1024 353L1049 786M1034 352L1060 788", "M1454 332L1446 640 1438 916", "M1472 332L1463 640 1454 920",
  "M965 359L972 457M976 506L979 556M985 641L986 655", "M1209 347L1212 466M1213 524L1215 585M1217 685V702",
  "M1032 497L799 481 972 457 1030 459M799 481L800 492 1033 510",
  "M1040 640L811 598 979 556 1036 563M811 598L812 608 1041 651",
  "M816 717L986 655 1042 666", "M1448 526L1051 499 1212 466 1449 475M1051 499L1052 512 1447 542",
  "M1443 713L1059 643 1215 585 1446 613M1059 643L1060 655 1443 728",
  "M1060 788L1217 702 1443 748", "M816 717L1438 902", "M810 724L1453 921",
  "M840 733L843 757 1451 957 1453 921M1451 957L1457 951 1458 914",
  "M1582 331L1567 640 1559 782 1454 918", "M1513 841L1532 846 1532 817M1532 846L1535 842 1536 812",
];

const Cabinet = () => (
  <Scene viewBox="332 153 1588 826" preserveAspectRatio="xMidYMid meet" shapeRendering="crispEdges" role="img" aria-label="Cabinet model">
    {faces.map(([fill, points]) => <polygon key={points} points={points} fill={fill} />)}
    <path d={edges.join("")} fill="none" stroke="#cfd3dd" strokeWidth="2" />
  </Scene>
);

const Cube = () => (
  <NavCube width="140" height="140" viewBox="120 39 420 420" aria-label="Navigation cube">
    <g fill="#8b8b8b" stroke="#1a1a1a" strokeWidth="2">
      <path d="M323 56l35 38h-70zM323 448l35-39h-70zM128 252l37-35v69zM520 252l-37-35v69z" />
      <path d="M268 76l5 22q-38 11-64 38l8 9-41 14 8-43 9 7q30-36 75-47zM380 75l-5 22q38 13 64 40l-8 9 41 13-9-43-9 7q-30-36-74-48z" />
      <circle cx="496" cy="80" r="20" />
      <path d="M238 169L318 163 404 163 422 184 431 204V290L420 312 376 345 356 364 324 366 308 359 240 336 220 308 211 212 219 190z" />
      <path d="M428 378l30-14 31 12v34l-31 12-30-12z" />
    </g>
    <g fill="none" stroke="#3a3a3a" strokeWidth="2.500">
      <path d="M220 192L301 194 316 168M301 194L322 221H360L373 190 361 165M373 190L422 184M322 221L324 333 308 355M360 221L362 333 376 344M324 333H362M238 336L310 354M428 378l30 10 31-12M458 388v34" />
    </g>
    <g fill="#45494e" fontFamily="Open Sans, sans-serif" fontWeight="600">
      <text transform="translate(215 279) skewY(7)" fontSize="32">FRONT</text>
      <text transform="translate(366 288) skewY(-20)" fontSize="23">RIGHT</text>
    </g>
    <path d="M199 352L183 216" stroke="#25258c" strokeWidth="6" />
    <path d="M199 352L300 390" stroke="#8a1c1c" strokeWidth="6" />
    <path d="M199 352L238 336" stroke="#22962e" strokeWidth="6" />
    <path d="M238 336L290 312" stroke="#a9aba9" strokeWidth="5" />
  </NavCube>
);

const Axes = () => (
  <AxisCross width="52" height="60" viewBox="0 0 52 60" aria-label="Axis cross">
    <path d="M11 44V20" stroke="#4338b8" strokeWidth="2" />
    <path d="M10 16l4 11H7z" fill="#4338b8" />
    <path d="M11 44l8-3" stroke="#5cb820" strokeWidth="2" />
    <path d="M23 39l-2 4-5-2z" fill="#5cb820" stroke="#5cb820" />
    <path d="M11 44l18 2" stroke="#e8351c" strokeWidth="2" />
    <path d="M37 47l-10-4v7z" fill="#e8351c" />
    <g fill="#d4d4d4" fontFamily="Open Sans, sans-serif" fontSize="10">
      <text x="11" y="14">Z</text><text x="26" y="39">Y</text><text x="38" y="47">X</text>
    </g>
  </AxisCross>
);

const Skyline = () => (
  <svg width="80" height="38" viewBox="0 0 80 38" aria-hidden="true">
    <path d="M4 10Q20 0 40 2t38 8v28H2z" fill="#25466a" />
    <path d="M16 12q0-7 8-6 4-7 12-4 8-4 13 1 9-2 12 4 11-1 14 6l-6 6-18-4-14 2-8-3z" fill="#e8a088" />
    <path d="M26 4q6-5 12-1 8-3 12 2l-8 3z" fill="#f8c860" />
    <path d="M42 14q12-5 28 2l-6 6-14-2z" fill="#b07cc8" />
    <path d="M0 10l16 16v12H0zM80 10L64 26v12h16z" fill="#a8702a" />
    <path d="M0 10l18 16-2 2L0 16zM80 10L62 26l2 2 16-12z" fill="#181c28" />
    <path d="M16 38V24l5-5 5 5v-3l5-5 4 6v-6l6-6 6 6v6l2-12 2 12 5-4 5 5v18z" fill="#d0943a" />
    <path d="M21 19l-5 5h10zM31 16l-5 6h9zM41 10l-6 6h12z" fill="#8a5426" />
    <path d="M49 6l3 12h-5z" fill="#1c2438" />
    <path d="M47 22h5v14h-5z" fill="#c0402c" />
    <path d="M4 22v12M9 26v8M20 26v9M25 27v8M34 22v13M39 20v14M44 22v12M57 25v9M61 26v8M71 24v10M76 20v14" stroke="#ffe08a" strokeWidth="2" strokeDasharray="3 2" />
    <path d="M2 36h76" stroke="#6a3c18" strokeWidth="3" />
    <path d="M22 14h1M30 16h1M12 17h1M34 13h1" stroke="#fff" />
  </svg>
);

const PropLine = ({ name, value, alt, on, open }: { name: string; value: string; alt: boolean; on?: boolean; open?: boolean }) => (
  <PropRow $alt={alt}>
    <Gutter $on={on}>{open && <Side />}</Gutter>
    <NameCell $on={on}>{name}</NameCell>
    <ValueCell $dense={open}>{value}</ValueCell>
  </PropRow>
);

const CloseX = ({ of }: { of: string }) => (
  <CloseTab aria-label={`Close ${of}`}>
    <Svg s={12} v={12}><path d="M1 1l10 10M11 1L1 11" stroke="#9a9a9a" strokeWidth="2" /></Svg>
  </CloseTab>
);

export default function App() {
  return (
    <Shell>
      <Global />
      <TitleBar>
        <FreeCadLogo s={15} />
        <TitleText>* Unnamed - FreeCAD 1.1.3</TitleText>
        <WinControls>
          <WinButton aria-label="Minimize"><Svg s={10} v={10}><path d="M0 5.500h10" stroke="#fff" /></Svg></WinButton>
          <WinButton aria-label="Restore"><Svg s={10} v={10}><path d="M.5 2.500h7v7h-7zM2.500 2.500v-2h7v7h-2" stroke="#fff" /></Svg></WinButton>
          <WinButton aria-label="Close"><Svg s={10} v={10}><path d="M0 0l10 10M10 0L0 10" stroke="#fff" strokeWidth="1.300" /></Svg></WinButton>
        </WinControls>
      </TitleBar>
      <MenuBar>
        {["File", "Edit", "View", "Tools", "Macro", "Windows", "Help"].map((m) => <MenuItem key={m}>{m}</MenuItem>)}
      </MenuBar>

      <Toolbar $h={39}>
        <Grip $w={11} />
        {["new", "open", "save"].map((n) => <ToolButton key={n} aria-label={n}><Svg>{I[n]}</Svg></ToolButton>)}
        <Grip $w={13} $after={2} />
        <ToolButton $w={45} aria-label="Undo"><Svg s={22}>{I.undo}</Svg><Down /></ToolButton>
        <ToolButton $w={45} aria-label="Redo"><Svg s={22}>{I.redo}</Svg><Down /></ToolButton>
        <Rule />
        <ToolButton aria-label="Refresh"><Svg>{I.refresh}</Svg></ToolButton>
        <Grip $w={24} />
        <TabStrip role="tablist">
          {benches.map(([icon, label, w]) => (
            <BenchTab key={label} role="tab" $w={w} $active={label === "CadAssets"}>
              <Svg s={16} v={icon === "toolbox" ? 24 : 16}>{I[icon]}</Svg>{label}
            </BenchTab>
          ))}
        </TabStrip>
        <ScrollButton aria-label="Scroll left"><Svg s={8} v={8}><path d="M6 0v8L2 4z" fill="#555" /></Svg></ScrollButton>
        <ScrollButton aria-label="Scroll right"><Svg s={8} v={8}><path d="M2 0v8l4-4z" fill="#999" /></Svg></ScrollButton>
        <ToolButton $w={42} aria-label="Add"><Svg s={14} v={16}>{I.plus}</Svg><Down /></ToolButton>
        <Grip $w={13} />
        <ToolButton $w={30} aria-label="Find"><Svg>{I.find}</Svg></ToolButton>
        <Extension aria-label="More tools">»</Extension>
        <Grip $w={13} />
        <ToolButton $w={30} aria-label="Structure"><Svg s={20}>{I.blocks}</Svg></ToolButton>
        <Extension aria-label="More tools">»</Extension>
        <Grip $w={13} />
        <ToolButton $w={36} aria-label="What's this"><Svg>{I.help}</Svg></ToolButton>
      </Toolbar>

      <Toolbar $h={39}>
        {toolGroups.map((group, g) => (
          <React.Fragment key={g}>
            <Grip $w={g ? 13 : 10} />
            {group.map((n, i) => <ToolButton key={i} aria-label={n}><Svg>{I[n]}</Svg></ToolButton>)}
          </React.Fragment>
        ))}
      </Toolbar>

      <Toolbar $h={30} $last>
        <Grip $w={10} />
        <LayerBar>
          <WideButton aria-label="Layer document"><Svg s={16} v={16}><path d="M3 1h7l4 4v10H3z" fill="#ddd" /><path d="M5 6l3-1 4 1-4 2zM5 8l3 2 4-2M5 11l3 2 4-2" stroke="#666" /></Svg></WideButton>
          <WideButton>+</WideButton>
          <SelectBox>
            <BareSelect aria-label="Active layer" defaultValue="0"><option>0</option></BareSelect>
            <Down c="#777" />
          </SelectBox>
          <WideButton aria-label="Visible"><Svg s={12} v={12}><path d="M0 6q6-7 12 0-6 7-12 0z" fill="#fff" /><circle cx="6" cy="6" r="3" fill="#d8401c" /><circle cx="6" cy="6" r="1.200" fill="#111" /></Svg></WideButton>
          <WideButton aria-label="Locked"><Svg s={14} v={14}><path d="M4 7V4c0-4 6-4 6 0v3" stroke="#050505" strokeWidth="2" /><path d="M2 6h10v8H2z" fill="#eab52e" /></Svg></WideButton>
          <ColourWell aria-label="Layer colour" />
        </LayerBar>
      </Toolbar>

      <Work>
        <Dock>
          <TabRow>
            <DockTab $active>Model</DockTab>
            <DockTab>Tasks</DockTab>
          </TabRow>
          <DockHead>
            <DockTitle>Model</DockTitle>
            <DockButton aria-label="Overlay"><Svg s={10} v={10}><path d="M.5.500h9v9h-9zM.5 3.500h9" stroke="#888" /></Svg></DockButton>
            <DockButton aria-label="Float"><Svg s={10} v={10}><path d="M.5 3.500h6v6h-6zM3.500 3.500v-3h6v6h-3" stroke="#888" /></Svg></DockButton>
            <DockButton aria-label="Close panel"><Svg s={10} v={10}><path d="M1 1l8 8M9 1L1 9" stroke="#444" strokeWidth="1.500" /></Svg></DockButton>
          </DockHead>
          <Tree>
            <TreeRow $indent={2} $gap={6} $bold><Down /><DocIcon s={14} />Unnamed</TreeRow>
            <TreeRow $indent={16} $gap={8}>
              <Side />
              <svg width="12" height="8" viewBox="0 0 12 8" aria-hidden="true"><path d="M1 4q5-6 10 0-5 6-10 0z" fill="#fff" /><circle cx="6" cy="4" r="2" fill="#111" /></svg>
              <Svg s={14} v={14}><g fill="#e4e4e4" stroke="#444" strokeWidth=".7"><path d="M1 10l4-2 8 2-5 4zM1 7l4-2 8 2-5 4zM1 3l5-3 7 3-5 4z" /></g></Svg>
              Layers
            </TreeRow>
          </Tree>
          <PropBox>
            <PropTable>
              <colgroup><col width="12" /><col width="129" /><col /></colgroup>
              <tbody>
                <tr><GroupCell colSpan={3}>Base</GroupCell></tr>
                <PropLine name="Placement" value="[(0.00 0.00 1.00); 0.00°; (153.66 ..." alt open />
                <PropLine name="Label" value="Cabinet" alt={false} />
                <tr><GroupCell colSpan={3}>Cabinet</GroupCell></tr>
                {cabinetProps.map(([n, v], i) => <PropLine key={n} name={n} value={v} alt={i % 2 === 1} on={n === "Shelves Per Bay"} />)}
              </tbody>
            </PropTable>
          </PropBox>
          <TabRow $center>
            <DockTab $bottom>View</DockTab>
            <DockTab $bottom $active>Data</DockTab>
          </TabRow>
        </Dock>

        <Viewer>
          <Canvas>
            <Cabinet />
            <Cube />
            <Axes />
          </Canvas>
          <DocTabs>
            <DocTab><FreeCadLogo s={16} />Start<CloseX of="Start" /></DocTab>
            <DocTab $active><DocIcon s={15} />Unnamed : 1*<CloseX of="Unnamed" /></DocTab>
          </DocTabs>
        </Viewer>
      </Work>

      <Status>
        <Message>
          <Svg s={12} v={12}><path d="M1 1l4 4M3 5l2-2 4 4-1 2-2-1zM8 8l3 4" stroke="#4a4a4a" strokeWidth="2" /></Svg>
          MCP Bridge running (XML-RPC:9875) | waiting for connections...
        </Message>
        <StatusItem $w={125}>Area: 5358.00 cm^2</StatusItem>
        <StatusItem $w={56}><Svg s={14} v={14}><path d="M0 0h14v14H0z" fill="#4a80c4" /><path d="M0 7l4-1 4 3 3-2 3 2v5H0z" fill="#2a5796" /></Svg>8<Down /></StatusItem>
        <StatusItem $w={68}>
          <Svg s={14} v={14}><path d="M3 4q0-4 4-4t4 4v6q0 4-4 4t-4-4zM7 3v2" stroke="#3c3c3c" /></Svg>
          <Spread>CAD</Spread><Down />
        </StatusItem>
        <StatusItem $w={176}><Spread $pad={17}>2585.30 mm x 1346.37 mm</Spread><Down /></StatusItem>
        <Badges>
          <Badge $bg="#2e7d32" $w={152}>MCP: Running (9875/9876)</Badge>
          <Badge $bg="#d9534f" $w={99} $bold>2D UNLOCKED</Badge>
        </Badges>
        <Coords>X: -128.86 | Y: -369.83</Coords>
      </Status>

      <Taskbar>
        <StartButton aria-label="Start menu"><Svg s={16} v={16}><path d="M0 2l7-1v7H0zM8 1l8-1v8H8zM0 9h7v6l-7-1zM8 9h8v7l-8-1z" fill="#fff" /></Svg></StartButton>
        <SearchBox>
          <Svg s={16} v={16}><circle cx="10" cy="6" r="5.300" stroke="#ddd" strokeWidth="1.300" /><path d="M6 10l-6 6" stroke="#ddd" strokeWidth="1.500" /></Svg>
          <SearchInput placeholder="Type here to search" aria-label="Type here to search" />
          <Skyline />
        </SearchBox>
        <TaskApp $w={50} aria-label="Task view"><Svg><path d="M4 3v3h10V3M4 21v-3h10v3M4 9h10v6H4zM18 3v18" stroke="#eee" strokeWidth="1.300" /><path d="M16 9h4v3h-4z" fill="#fff" /></Svg></TaskApp>
        <TaskApp $running aria-label="Obsidian"><Svg>{I.obsidian}</Svg></TaskApp>
        <TaskApp aria-label="Files"><Svg>{I.folder}</Svg></TaskApp>
        <TaskApp $running aria-label="Brave"><Svg>{I.brave}</Svg></TaskApp>
        <TaskApp $running aria-label="Code"><Svg>{I.code}</Svg></TaskApp>
        <TaskApp $running $active $w={48} aria-label="FreeCAD"><FreeCadLogo s={24} /></TaskApp>
        <TaskApp $running aria-label="AutoCAD">
          <Svg>
            <path d="M1 1h5v17H1z" fill="#f0708a" /><path d="M4 0h19v18H4z" fill="#e0142c" /><path d="M3 17h20v7H3z" fill="#7c1520" />
            <text x="13" y="14" textAnchor="middle" fontSize="14" fontWeight="700" fontFamily="Open Sans" fill="#fff">A</text>
            <text x="13" y="23" textAnchor="middle" fontSize="5" fontWeight="700" fontFamily="Open Sans" fill="#fff">CAD</text>
          </Svg>
        </TaskApp>
        <Tray>
          <TrayButton $w={64} aria-label="Weather">
            <Svg>
              <circle cx="11" cy="14" r="9" fill="#f0a030" />
              <path d="M1 9q-1-4 3-4 2-4 6-2 3 0 3 3 2 3-1 4H3z" fill="#a9cdf2" />
              <path d="M10 22q-1-4 3-5 3-4 7-1 4 0 4 4 0 3-3 3H12z" fill="#bcd8f4" />
              <circle cx="18" cy="7" r="6" fill="#e0302c" />
              <text x="18" y="11" textAnchor="middle" fontSize="11" fontWeight="700" fontFamily="Open Sans" fill="#fff">4</text>
            </Svg>
          </TrayButton>
          <TrayButton aria-label="Hidden icons"><Svg s={12} v={12}><path d="M0 9l6-6 6 6" stroke="#eee" strokeWidth="1.300" /></Svg></TrayButton>
          <TrayButton aria-label="VNC"><Svg s={16} v={16}><path d="M1 3l4 10 4-10M15 4H9l-2 5M9 12l6-8" stroke="#a4a8aa" strokeWidth="2.200" /><circle cx="12" cy="12" r="3" fill="#a4a8aa" /></Svg></TrayButton>
          <TrayButton aria-label="Meet now"><Svg s={16} v={16}><path d="M3 5h7v7H3zM10 8l3-2v5l-3-2M4 2q4-2 8 0M4 15q4 2 8 0" stroke="#eee" strokeWidth="1.300" /></Svg></TrayButton>
          <TrayButton aria-label="Network"><Svg s={16} v={16}><path d="M4 3.500h11v8H4M10 12v3M6 15h8M.5 1.500h4v4h-4zM2.500 6v6" stroke="#eee" strokeWidth="1.200" /></Svg></TrayButton>
          <TrayButton aria-label="Volume"><Svg s={16} v={16}><path d="M1 6h2l4-4v12l-4-4H1zM9 6q1 2 0 4M11 4q3 4 0 8" stroke="#eee" strokeWidth="1.200" /><path d="M13 2q4 6 0 12" stroke="#788" /></Svg></TrayButton>
          <Clock>2:13 PM<br />10/15/2026</Clock>
          <TrayButton $w={42} aria-label="Notifications">
            <Svg s={26} v={26}>
              <path d="M2 3h16v13h-9l-4 4v-4H2z" fill="#fff" /><path d="M5 6.500h10M5 9.500h10M5 12.500h7" stroke="#1b282d" />
              <circle cx="17" cy="18" r="7.500" fill="#3a4144" stroke="#aaa" />
              <text x="17" y="22" textAnchor="middle" fontSize="11" fontWeight="600" fontFamily="Open Sans" fill="#fff">2</text>
            </Svg>
          </TrayButton>
          <ShowDesktop />
        </Tray>
      </Taskbar>
    </Shell>
  );
}
